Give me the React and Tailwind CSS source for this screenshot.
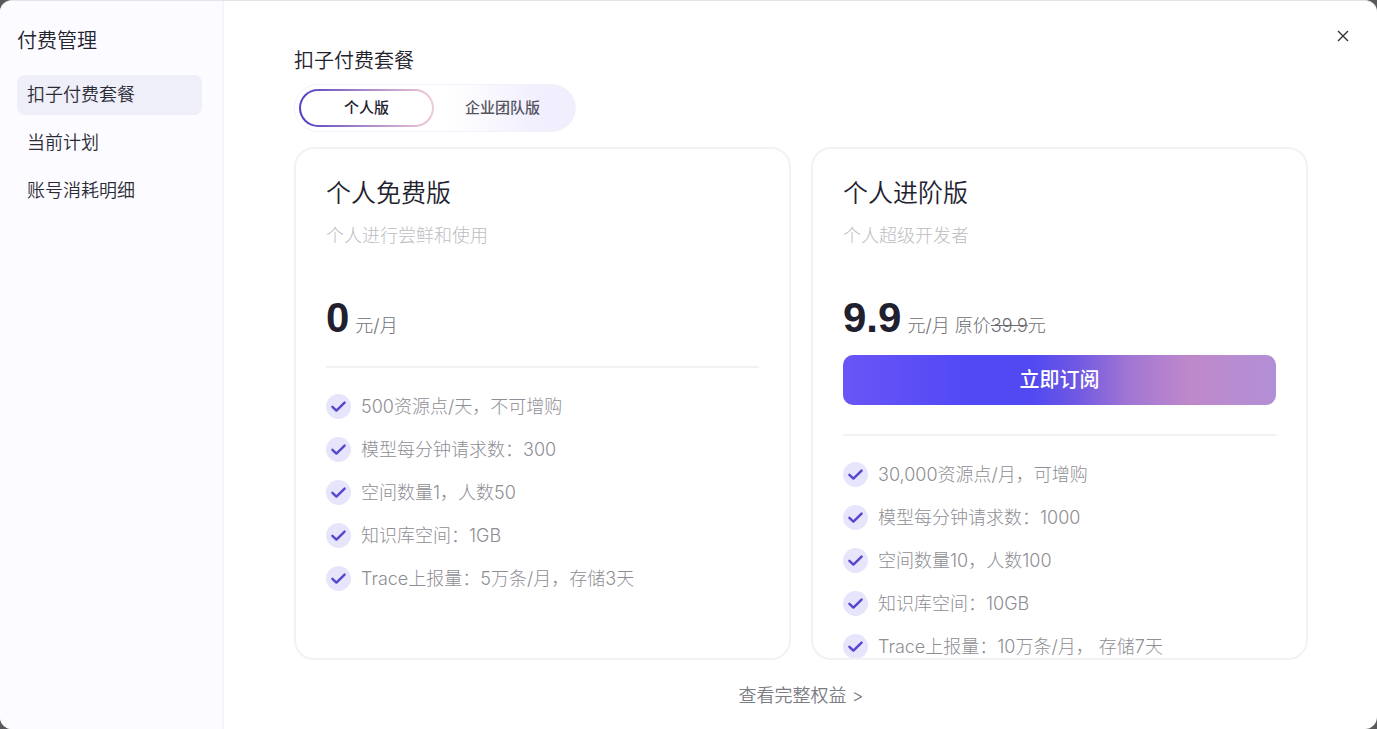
import React, { useState } from 'react';

const menuItems = ['扣子付费套餐', '当前计划', '账号消耗明细'];

const tabs = [
    { key: 'personal', label: '个人版' },
    { key: 'team', label: '企业团队版' },
];

const plans = [
    {
        name: '个人免费版',
        desc: '个人进行尝鲜和使用',
        price: '0',
        features: [
            '500资源点/天，不可增购',
            '模型每分钟请求数：300',
            '空间数量1，人数50',
            '知识库空间：1GB',
            'Trace上报量：5万条/月，存储3天',
        ],
    },
    {
        name: '个人进阶版',
        desc: '个人超级开发者',
        price: '9.9',
        originalPrice: '39.9',
        action: '立即订阅',
        features: [
            '30,000资源点/月，可增购',
            '模型每分钟请求数：1000',
            '空间数量10，人数100',
            '知识库空间：10GB',
            'Trace上报量：10万条/月， 存储7天',
        ],
    },
];

const CheckBadge = () => (
    <span className="flex size-[25px] shrink-0 items-center justify-center rounded-full bg-[#e6e5fc]">
        <svg viewBox="0 0 25 25" className="size-[25px]" fill="none" aria-hidden="true">
            <path d="M6.4 12.8 10.4 16.6 18.6 8.6" stroke="#5546ce" strokeWidth="2.4" strokeLinecap="round" strokeLinejoin="round" />
        </svg>
    </span>
);

const PlanCard = ({ plan }) => (
    <section className="min-w-0 flex-1 overflow-y-auto rounded-[20px] border-2 border-[#f2f2f4] px-[30px] pt-[26px] [scrollbar-width:none]">
        <h2 className="text-[25px] leading-9 font-[350] text-[#22222e]">{plan.name}</h2>
        <p className="mt-[13px] text-[18px] leading-6 font-light text-[#bdbdc2]">{plan.desc}</p>

        <div className="mt-[46px] flex items-baseline gap-[6px] text-[#6c6c74]">
            <span className="font-['Liberation_Sans',sans-serif] text-[42px] leading-[48px] font-bold text-[#20202e]">{plan.price}</span>
            <span className="text-[18px] leading-6 font-light">
                元/月
                {plan.originalPrice && (
                    <> 原价<del>{plan.originalPrice}</del>元</>
                )}
            </span>
        </div>

        {plan.action && (
            <button
                type="button"
                className="mt-[13px] block h-[50px] w-full cursor-pointer rounded-[10px] bg-[linear-gradient(90deg,#6a55f6_0%,#5249f5_28%,#5249f2_44%,#7059e2_54%,#a176d4_66%,#bf88ca_80%,#b28fd6_100%)] text-[20px] font-medium text-white"
            >
                {plan.action}
            </button>
        )}

        <hr className={plan.action ? 'mt-[29px] border-t-2 border-[#f2f2f4]' : 'mt-[24px] border-t-2 border-[#f2f2f4]'} />

        <ul className="mt-[26px] flex flex-col gap-[18px]">
            {plan.features.map(feature => (
                <li key={feature} className="flex items-center gap-[10px] text-[18px] leading-6 font-light text-[#8e8e94]">
                    <CheckBadge />
                    <span className="whitespace-nowrap">{feature}</span>
                </li>
            ))}
        </ul>
    </section>
);

function App() {
    const [activeMenu, setActiveMenu] = useState(menuItems[0]);
    const [activeTab, setActiveTab] = useState('personal');

    return (
        <div className="h-screen bg-[#59595c] font-[Inter,'Noto_Sans_CJK_SC',sans-serif]">
            <div className="flex h-full overflow-hidden rounded-[12px] border-t border-[#e4e4e6] bg-white">
                {/* Sidebar */}
                <aside className="w-[224px] shrink-0 border-r-2 border-[#f6f5fa] bg-[#fcfbff] pt-[26px] pr-5 pl-[17px]">
                    <h1 className="text-[20px] leading-7 font-[350] text-[#22222e]">付费管理</h1>
                    <nav className="mt-5 flex flex-col gap-2">
                        {menuItems.map(item => (
                            <a
                                key={item}
                                href="#"
                                onClick={() => setActiveMenu(item)}
                                className={`block rounded-lg px-[10px] text-[18px] leading-10 font-[350] text-[#2b2b36] ${item === activeMenu ? 'bg-[#efeff9]' : ''}`}
                            >
                                {item}
                            </a>
                        ))}
                    </nav>
                </aside>

                {/* Plans */}
                <main className="relative flex min-w-0 flex-1 flex-col pt-[46px] pr-[69px] pb-[21px] pl-[70px]">
                    <button type="button" aria-label="关闭" className="absolute top-[25px] right-6 cursor-pointer p-1 text-[#333338]">
                        <svg viewBox="0 0 12 12" className="size-3" fill="none" stroke="currentColor" strokeWidth="1.4" aria-hidden="true">
                            <path d="M1 1 11 11M11 1 1 11" />
                        </svg>
                    </button>

                    <h2 className="text-[20px] leading-7 font-[350] text-[#22222e]">扣子付费套餐</h2>

                    <div className="mt-[9px] flex h-12 w-[282px] rounded-full border border-[#f3f1fb] bg-[linear-gradient(90deg,#ffffff_55%,#f1eefe_88%)] p-1">
                        {tabs.map(tab => (
                            <button
                                key={tab.key}
                                type="button"
                                onClick={() => setActiveTab(tab.key)}
                                className={
                                    tab.key === activeTab
                                        ? 'w-[135px] cursor-pointer rounded-full border-2 border-transparent text-[15px] font-medium text-[#22222e] [background:linear-gradient(#fff,#fff)_padding-box,linear-gradient(90deg,#5040c4,#a582c6_45%,#f0ccd8)_border-box]'
                                        : 'flex-1 cursor-pointer rounded-full text-[15px] font-medium text-[#55555f]'
                                }
                            >
                                {tab.label}
                            </button>
                        ))}
                    </div>

                    <div className="mt-[15px] flex min-h-0 flex-1 gap-5">
                        {plans.map(plan => (
                            <PlanCard key={plan.name} plan={plan} />
                        ))}
                    </div>

                    <a href="#" className="mt-6 self-center text-[18px] leading-6 font-[350] text-[#7c7c84]">
                        查看完整权益 &gt;
                    </a>
                </main>
            </div>
        </div>
    );
}

export default App;
